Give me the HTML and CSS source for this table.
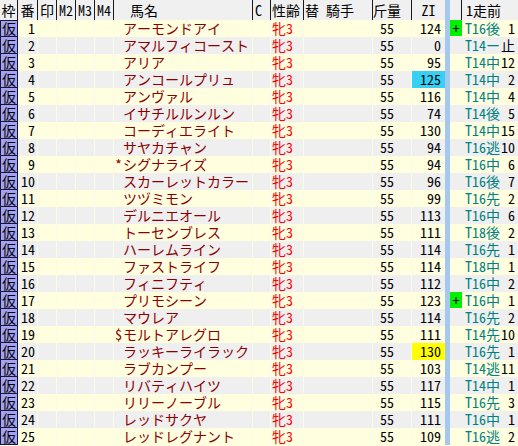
FILE: index.html
```html
<!DOCTYPE html>
<html lang="ja">
<head>
<meta charset="utf-8">
<title>出馬表</title>
<link rel="stylesheet" href="styles.css">
</head>
<body>
<div class="sheet">
  <div class="row head">
    <div class="c waku">枠</div>
    <div class="c ctr">番</div>
    <div class="c ctr">印</div>
    <div class="c ctr">M2</div>
    <div class="c ctr">M3</div>
    <div class="c ctr">M4</div>
    <div class="c hname">馬名</div>
    <div class="c hc">C</div>
    <div class="c hsei">性齢</div>
    <div class="c hjk"><span>替</span><span class="jk">騎手</span></div>
    <div class="c hkin">斤量</div>
    <div class="c ctr hzi">ZI</div>
    <div class="strip"></div>
    <div class="c hplus"></div>
    <div class="c hprev">1走前</div>
  </div>

  <div class="row odd"><div class="c waku">仮</div><div class="c num">1</div><div class="c"></div><div class="c"></div><div class="c"></div><div class="c"></div><div class="c name"><span class="mk"></span>アーモンドアイ</div><div class="c"></div><div class="c sei">牝3</div><div class="c"></div><div class="c kin">55</div><div class="c zi">124</div><div class="strip"></div><div class="c plus"><span class="pl">+</span></div><div class="c prev"><span class="crs">T16後</span><span class="pos">1</span></div></div>
  <div class="row even"><div class="c waku">仮</div><div class="c num">2</div><div class="c"></div><div class="c"></div><div class="c"></div><div class="c"></div><div class="c name"><span class="mk"></span>アマルフィコースト</div><div class="c"></div><div class="c sei">牝3</div><div class="c"></div><div class="c kin">55</div><div class="c zi">0</div><div class="strip"></div><div class="c plus"></div><div class="c prev"><span class="crs">T14ー</span><span class="pos">止</span></div></div>
  <div class="row odd"><div class="c waku">仮</div><div class="c num">3</div><div class="c"></div><div class="c"></div><div class="c"></div><div class="c"></div><div class="c name"><span class="mk"></span>アリア</div><div class="c"></div><div class="c sei">牝3</div><div class="c"></div><div class="c kin">55</div><div class="c zi">95</div><div class="strip"></div><div class="c plus"></div><div class="c prev"><span class="crs">T14中</span><span class="pos">12</span></div></div>
  <div class="row even"><div class="c waku">仮</div><div class="c num">4</div><div class="c"></div><div class="c"></div><div class="c"></div><div class="c"></div><div class="c name"><span class="mk"></span>アンコールプリュ</div><div class="c"></div><div class="c sei">牝3</div><div class="c"></div><div class="c kin">55</div><div class="c zi cyan">125</div><div class="strip"></div><div class="c plus"></div><div class="c prev"><span class="crs">T14中</span><span class="pos">2</span></div></div>
  <div class="row odd"><div class="c waku">仮</div><div class="c num">5</div><div class="c"></div><div class="c"></div><div class="c"></div><div class="c"></div><div class="c name"><span class="mk"></span>アンヴァル</div><div class="c"></div><div class="c sei">牝3</div><div class="c"></div><div class="c kin">55</div><div class="c zi">116</div><div class="strip"></div><div class="c plus"></div><div class="c prev"><span class="crs">T14中</span><span class="pos">4</span></div></div>
  <div class="row even"><div class="c waku">仮</div><div class="c num">6</div><div class="c"></div><div class="c"></div><div class="c"></div><div class="c"></div><div class="c name"><span class="mk"></span>イサチルルンルン</div><div class="c"></div><div class="c sei">牝3</div><div class="c"></div><div class="c kin">55</div><div class="c zi">74</div><div class="strip"></div><div class="c plus"></div><div class="c prev"><span class="crs">T14後</span><span class="pos">5</span></div></div>
  <div class="row odd"><div class="c waku">仮</div><div class="c num">7</div><div class="c"></div><div class="c"></div><div class="c"></div><div class="c"></div><div class="c name"><span class="mk"></span>コーディエライト</div><div class="c"></div><div class="c sei">牝3</div><div class="c"></div><div class="c kin">55</div><div class="c zi">130</div><div class="strip"></div><div class="c plus"></div><div class="c prev"><span class="crs">T14中</span><span class="pos">15</span></div></div>
  <div class="row even"><div class="c waku">仮</div><div class="c num">8</div><div class="c"></div><div class="c"></div><div class="c"></div><div class="c"></div><div class="c name"><span class="mk"></span>サヤカチャン</div><div class="c"></div><div class="c sei">牝3</div><div class="c"></div><div class="c kin">55</div><div class="c zi">94</div><div class="strip"></div><div class="c plus"></div><div class="c prev"><span class="crs">T16逃</span><span class="pos">10</span></div></div>
  <div class="row odd"><div class="c waku">仮</div><div class="c num">9</div><div class="c"></div><div class="c"></div><div class="c"></div><div class="c"></div><div class="c name"><span class="mk">*</span>シグナライズ</div><div class="c"></div><div class="c sei">牝3</div><div class="c"></div><div class="c kin">55</div><div class="c zi">94</div><div class="strip"></div><div class="c plus"></div><div class="c prev"><span class="crs">T16中</span><span class="pos">6</span></div></div>
  <div class="row even"><div class="c waku">仮</div><div class="c num">10</div><div class="c"></div><div class="c"></div><div class="c"></div><div class="c"></div><div class="c name"><span class="mk"></span>スカーレットカラー</div><div class="c"></div><div class="c sei">牝3</div><div class="c"></div><div class="c kin">55</div><div class="c zi">96</div><div class="strip"></div><div class="c plus"></div><div class="c prev"><span class="crs">T16後</span><span class="pos">7</span></div></div>
  <div class="row odd"><div class="c waku">仮</div><div class="c num">11</div><div class="c"></div><div class="c"></div><div class="c"></div><div class="c"></div><div class="c name"><span class="mk"></span>ツヅミモン</div><div class="c"></div><div class="c sei">牝3</div><div class="c"></div><div class="c kin">55</div><div class="c zi">99</div><div class="strip"></div><div class="c plus"></div><div class="c prev"><span class="crs">T16先</span><span class="pos">2</span></div></div>
  <div class="row even"><div class="c waku">仮</div><div class="c num">12</div><div class="c"></div><div class="c"></div><div class="c"></div><div class="c"></div><div class="c name"><span class="mk"></span>デルニエオール</div><div class="c"></div><div class="c sei">牝3</div><div class="c"></div><div class="c kin">55</div><div class="c zi">113</div><div class="strip"></div><div class="c plus"></div><div class="c prev"><span class="crs">T16中</span><span class="pos">6</span></div></div>
  <div class="row odd"><div class="c waku">仮</div><div class="c num">13</div><div class="c"></div><div class="c"></div><div class="c"></div><div class="c"></div><div class="c name"><span class="mk"></span>トーセンブレス</div><div class="c"></div><div class="c sei">牝3</div><div class="c"></div><div class="c kin">55</div><div class="c zi">111</div><div class="strip"></div><div class="c plus"></div><div class="c prev"><span class="crs">T18後</span><span class="pos">2</span></div></div>
  <div class="row even"><div class="c waku">仮</div><div class="c num">14</div><div class="c"></div><div class="c"></div><div class="c"></div><div class="c"></div><div class="c name"><span class="mk"></span>ハーレムライン</div><div class="c"></div><div class="c sei">牝3</div><div class="c"></div><div class="c kin">55</div><div class="c zi">114</div><div class="strip"></div><div class="c plus"></div><div class="c prev"><span class="crs">T16先</span><span class="pos">1</span></div></div>
  <div class="row odd"><div class="c waku">仮</div><div class="c num">15</div><div class="c"></div><div class="c"></div><div class="c"></div><div class="c"></div><div class="c name"><span class="mk"></span>ファストライフ</div><div class="c"></div><div class="c sei">牝3</div><div class="c"></div><div class="c kin">55</div><div class="c zi">114</div><div class="strip"></div><div class="c plus"></div><div class="c prev"><span class="crs">T18中</span><span class="pos">1</span></div></div>
  <div class="row even"><div class="c waku">仮</div><div class="c num">16</div><div class="c"></div><div class="c"></div><div class="c"></div><div class="c"></div><div class="c name"><span class="mk"></span>フィニフティ</div><div class="c"></div><div class="c sei">牝3</div><div class="c"></div><div class="c kin">55</div><div class="c zi">112</div><div class="strip"></div><div class="c plus"></div><div class="c prev"><span class="crs">T16中</span><span class="pos">2</span></div></div>
  <div class="row odd"><div class="c waku">仮</div><div class="c num">17</div><div class="c"></div><div class="c"></div><div class="c"></div><div class="c"></div><div class="c name"><span class="mk"></span>プリモシーン</div><div class="c"></div><div class="c sei">牝3</div><div class="c"></div><div class="c kin">55</div><div class="c zi">123</div><div class="strip"></div><div class="c plus"><span class="pl">+</span></div><div class="c prev"><span class="crs">T16中</span><span class="pos">1</span></div></div>
  <div class="row even"><div class="c waku">仮</div><div class="c num">18</div><div class="c"></div><div class="c"></div><div class="c"></div><div class="c"></div><div class="c name"><span class="mk"></span>マウレア</div><div class="c"></div><div class="c sei">牝3</div><div class="c"></div><div class="c kin">55</div><div class="c zi">114</div><div class="strip"></div><div class="c plus"></div><div class="c prev"><span class="crs">T16先</span><span class="pos">2</span></div></div>
  <div class="row odd"><div class="c waku">仮</div><div class="c num">19</div><div class="c"></div><div class="c"></div><div class="c"></div><div class="c"></div><div class="c name"><span class="mk">$</span>モルトアレグロ</div><div class="c"></div><div class="c sei">牝3</div><div class="c"></div><div class="c kin">55</div><div class="c zi">111</div><div class="strip"></div><div class="c plus"></div><div class="c prev"><span class="crs">T14先</span><span class="pos">10</span></div></div>
  <div class="row even"><div class="c waku">仮</div><div class="c num">20</div><div class="c"></div><div class="c"></div><div class="c"></div><div class="c"></div><div class="c name"><span class="mk"></span>ラッキーライラック</div><div class="c"></div><div class="c sei">牝3</div><div class="c"></div><div class="c kin">55</div><div class="c zi yellow">130</div><div class="strip"></div><div class="c plus"></div><div class="c prev"><span class="crs">T16先</span><span class="pos">1</span></div></div>
  <div class="row odd"><div class="c waku">仮</div><div class="c num">21</div><div class="c"></div><div class="c"></div><div class="c"></div><div class="c"></div><div class="c name"><span class="mk"></span>ラブカンプー</div><div class="c"></div><div class="c sei">牝3</div><div class="c"></div><div class="c kin">55</div><div class="c zi">103</div><div class="strip"></div><div class="c plus"></div><div class="c prev"><span class="crs">T14逃</span><span class="pos">11</span></div></div>
  <div class="row even"><div class="c waku">仮</div><div class="c num">22</div><div class="c"></div><div class="c"></div><div class="c"></div><div class="c"></div><div class="c name"><span class="mk"></span>リバティハイツ</div><div class="c"></div><div class="c sei">牝3</div><div class="c"></div><div class="c kin">55</div><div class="c zi">117</div><div class="strip"></div><div class="c plus"></div><div class="c prev"><span class="crs">T14中</span><span class="pos">1</span></div></div>
  <div class="row odd"><div class="c waku">仮</div><div class="c num">23</div><div class="c"></div><div class="c"></div><div class="c"></div><div class="c"></div><div class="c name"><span class="mk"></span>リリーノーブル</div><div class="c"></div><div class="c sei">牝3</div><div class="c"></div><div class="c kin">55</div><div class="c zi">115</div><div class="strip"></div><div class="c plus"></div><div class="c prev"><span class="crs">T16先</span><span class="pos">3</span></div></div>
  <div class="row even"><div class="c waku">仮</div><div class="c num">24</div><div class="c"></div><div class="c"></div><div class="c"></div><div class="c"></div><div class="c name"><span class="mk"></span>レッドサクヤ</div><div class="c"></div><div class="c sei">牝3</div><div class="c"></div><div class="c kin">55</div><div class="c zi">111</div><div class="strip"></div><div class="c plus"></div><div class="c prev"><span class="crs">T16中</span><span class="pos">1</span></div></div>
  <div class="row odd"><div class="c waku">仮</div><div class="c num">25</div><div class="c"></div><div class="c"></div><div class="c"></div><div class="c"></div><div class="c name"><span class="mk"></span>レッドレグナント</div><div class="c"></div><div class="c sei">牝3</div><div class="c"></div><div class="c kin">55</div><div class="c zi">109</div><div class="strip"></div><div class="c plus"></div><div class="c prev"><span class="crs">T16逃</span><span class="pos">2</span></div></div>
</div>
</body>
</html>
```

FILE: styles.css
```css
html, body {
  margin: 0;
  padding: 0;
  background: #ffffe0;
}

.sheet {
  width: 518px;
  font-family: "Noto Sans Mono CJK JP", "Noto Sans CJK JP", monospace;
  font-size: 14px;
  color: #000;
  overflow: hidden;
}

.row {
  display: grid;
  grid-template-columns: 18px 20px 19px 19px 19px 19px 139px 18px 33px 69px 39px 33px 5px 12px 56px;
  height: 17px;
  line-height: 17px;
}

.c {
  box-sizing: border-box;
  border-right: 1px solid #fbfbea;
  white-space: nowrap;
}

.odd { background: #ffffe0; }
.even { background: #efefef; }

/* header */
.head {
  height: 20px;
  line-height: 20px;
  background: #f0f0f0;
}
.head .c { border-right: 1px solid #1a1a1a; }
.head .hzi { border-right: none; }
.ctr { text-align: center; }
.hname { padding-left: 16px; }
.hc { padding-left: 2px; }
.hsei { padding-left: 1px; }
.hjk { padding-left: 1px; }
.hjk .jk { margin-left: 7px; }
.head .hprev { border-right: none; padding-left: 4px; }

/* frame column */
.waku { text-align: center; }
.row:not(.head) .waku {
  background: #a3a3f2;
  border: 1px solid #15153a;
  border-top: none;
  line-height: 16px;
}
.head + .row .waku { border-top: 1px solid #15153a; line-height: 15px; }
.head .waku { background: #f0f0f0; }

.num { text-align: right; padding-right: 2px; }

.name { color: #8b0000; padding-left: 1px; }
.mk { display: inline-block; width: 8px; color: #8b0000; }

.sei { color: #ff0000; padding-left: 1px; }

.kin { padding-left: 7px; }

.zi { text-align: right; padding-right: 4px; border-right: none; }
.cyan { background: #36d0f4; }
.yellow { background: #ffff00; }

.strip { background: #a6c8ee; }

.plus { border-right: none; }
.pl {
  display: block;
  height: 16px;
  line-height: 16px;
  background: #00f000;
  text-align: center;
}

.prev {
  display: flex;
  padding-left: 3px;
  padding-right: 3px;
  border-right: none;
}
.crs { color: #008080; flex: none; }
.pos { margin-left: auto; flex: none; text-align: right; }
```
